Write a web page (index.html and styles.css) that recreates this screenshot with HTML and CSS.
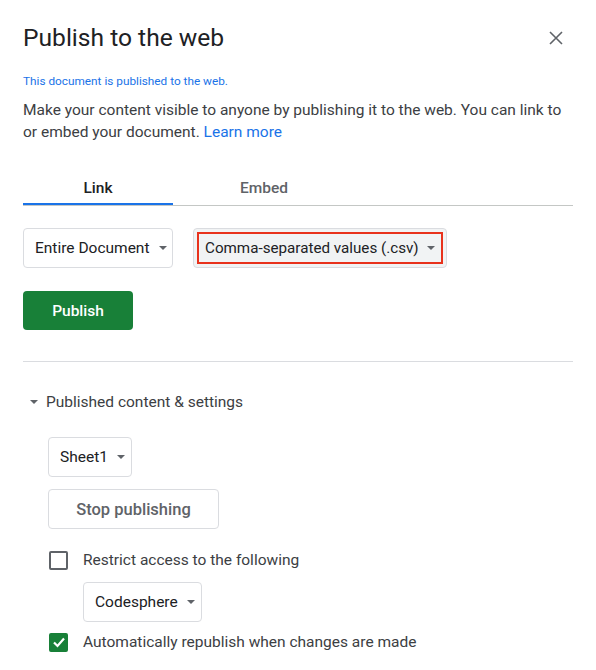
FILE: index.html
```html
<!DOCTYPE html>
<html>
<head>
<meta charset="utf-8">
<link rel="stylesheet" href="styles.css">
</head>
<body>
<div class="dialog">
  <div class="header">
    <h1 class="title">Publish to the web</h1>
    <svg class="close" width="14" height="14" viewBox="0 0 14 14"><path d="M1 1L13 13M13 1L1 13" stroke="#5f6368" stroke-width="1.6"/></svg>
  </div>
  <div class="note">This document is published to the web.</div>
  <p class="desc">Make your content visible to anyone by publishing it to the web. You can link to or embed your document. <span class="link">Learn more</span></p>

  <div class="tabs">
    <div class="tab active">Link</div>
    <div class="tab">Embed</div>
  </div>

  <div class="selects">
    <div class="select sel-doc">Entire Document <span class="caret"></span></div>
    <div class="select sel-csv"><div class="hl">Comma-separated values (.csv) <span class="caret"></span></div></div>
  </div>

  <button class="publish">Publish</button>

  <div class="sep"></div>

  <div class="section-head"><span class="caret"></span>Published content &amp; settings</div>

  <div class="settings">
    <div class="select sel-sheet">Sheet1 <span class="caret"></span></div>
    <button class="stop">Stop publishing</button>
    <div class="check-row">
      <span class="cb"></span>
      <span>Restrict access to the following</span>
    </div>
    <div class="select sel-org">Codesphere <span class="caret"></span></div>
    <div class="check-row">
      <span class="cb checked"><svg width="18" height="18" viewBox="0 0 18 18"><path d="M4 9.5L7.5 13L14 5.5" stroke="#fff" stroke-width="2.2" fill="none"/></svg></span>
      <span>Automatically republish when changes are made</span>
    </div>
  </div>
</div>
</body>
</html>
```
FILE: styles.css
```css
* { box-sizing: border-box; }
html, body { margin: 0; padding: 0; background: #fff; }
body {
  font-family: Roboto, "Liberation Sans", Arial, sans-serif;
  color: #3c4043;
  font-size: 15.5px;
}
.dialog {
  padding: 22px 23px 0 23px;
  width: 596px;
}
.header {
  display: flex;
  justify-content: space-between;
  align-items: center;
}
.title {
  margin: 0;
  font-size: 24.6px;
  font-weight: 400;
  color: #202124;
  line-height: 32px;
}
.close { margin-right: 10px; }
.note {
  margin-top: 19px;
  font-size: 11.8px;
  color: #1a73e8;
  line-height: 16px;
}
.desc {
  margin: 10px 0 0 0;
  line-height: 22px;
  font-size: 15.5px;
  color: #3c4043;
}
.link { color: #1a73e8; }
.tabs {
  margin-top: 31px;
  display: flex;
  border-bottom: 1px solid #c4c7c5;
}
.tab {
  height: 31px;
  font-size: 15.5px;
  font-weight: 500;
  color: #5f6368;
  text-align: center;
  line-height: 28px;
  width: 150px;
}
.tab + .tab { width: 182px; }
.tab.active {
  color: #202124;
  border-bottom: 2px solid #1a73e8;
  margin-bottom: -1px;
}
.selects {
  margin-top: 22px;
  display: flex;
  gap: 20px;
}
.select {
  display: inline-flex;
  align-items: center;
  height: 40px;
  border: 1px solid #dadce0;
  border-radius: 4px;
  padding: 0 9px 0 11px;
  color: #202124;
  font-size: 15.5px;
  background: #fff;
  white-space: nowrap;
  flex: none;
}
.caret {
  display: inline-block;
  flex: none;
  width: 0; height: 0;
  border-left: 4.5px solid transparent;
  border-right: 4.5px solid transparent;
  border-top: 4.5px solid #5f6368;
  margin-left: 9px;
}
.sel-doc { width: 150px; }
.sel-csv {
  width: 254px;
  padding: 3px;
  background: #f1f3f4;
}
.hl {
  height: 100%;
  width: 100%;
  border: 2px solid #e8321c;
  display: flex;
  align-items: center;
  padding: 0 4px 0 6px;
  white-space: nowrap;
  font-size: 15.2px;
}
.hl .caret { margin-left: 8px; }
.publish {
  display: block;
  margin-top: 23px;
  width: 110px;
  height: 39px;
  background: #188038;
  color: #fff;
  border: none;
  border-radius: 4px;
  font-family: inherit;
  font-size: 15.5px;
  font-weight: 500;
}
.sep {
  margin-top: 31px;
  border-top: 1px solid #dadce0;
}
.section-head {
  margin-top: 29px;
  display: flex;
  align-items: center;
  font-size: 15.5px;
  color: #3c4043;
  line-height: 22px;
}
.section-head .caret {
  margin: 0 8px 0 7px;
  border-top-color: #5f6368;
}
.settings {
  padding-left: 25px;
  margin-top: 24px;
  display: flex;
  flex-direction: column;
  align-items: flex-start;
}
.sel-sheet { width: 84px; }
.stop {
  margin-top: 12px;
  width: 171px;
  height: 40px;
  background: #fff;
  border: 1px solid #dadce0;
  border-radius: 4px;
  font-family: inherit;
  font-size: 16.5px;
  font-weight: 500;
  color: #5f6368;
}
.check-row {
  display: flex;
  align-items: center;
  margin-top: 21px;
  color: #3c4043;
  font-size: 15.5px;
  line-height: 20px;
}
.cb {
  width: 19px;
  height: 19px;
  border: 2px solid #5f6368;
  border-radius: 2px;
  margin: 0 15px 0 1px;
  display: inline-flex;
  align-items: center;
  justify-content: center;
}
.cb.checked {
  background: #188038;
  border-color: #188038;
}
.cb.checked svg { flex: none; }
.sel-org {
  margin-top: 12px;
  margin-left: 35px;
  width: 119px;
}
.sel-org + .check-row { margin-top: 10px; }
```
